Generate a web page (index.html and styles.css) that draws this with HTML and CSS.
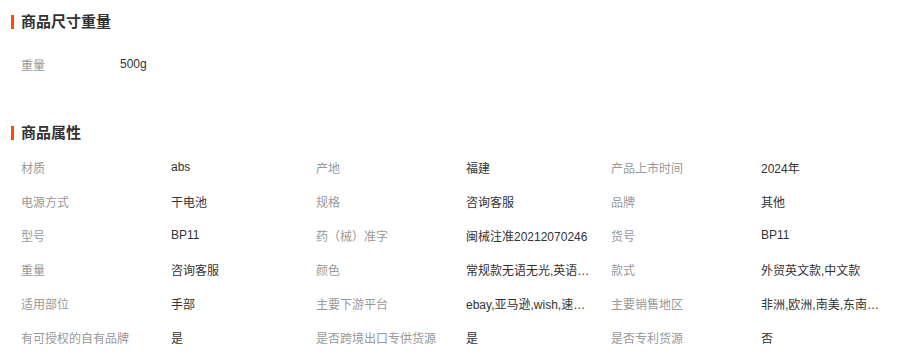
FILE: index.html
```html
<!DOCTYPE html>
<html lang="zh-CN">
<head>
<meta charset="utf-8">
<link rel="stylesheet" href="styles.css">
</head>
<body>
<div class="page">
  <section class="section">
    <h2 class="title">商品尺寸重量</h2>
    <div class="size-row">
      <span class="label short">重量</span>
      <span class="value">500g</span>
    </div>
  </section>
  <section class="section attrs">
    <h2 class="title">商品属性</h2>
    <div class="grid">
      <span class="label">材质</span><span class="value">abs</span>
      <span class="label">产地</span><span class="value">福建</span>
      <span class="label">产品上市时间</span><span class="value">2024年</span>

      <span class="label">电源方式</span><span class="value">干电池</span>
      <span class="label">规格</span><span class="value">咨询客服</span>
      <span class="label">品牌</span><span class="value">其他</span>

      <span class="label">型号</span><span class="value">BP11</span>
      <span class="label">药（械）准字</span><span class="value">闽械注准20212070246</span>
      <span class="label">货号</span><span class="value">BP11</span>

      <span class="label">重量</span><span class="value">咨询客服</span>
      <span class="label">颜色</span><span class="value">常规款无语无光,英语款有语音有光</span>
      <span class="label">款式</span><span class="value">外贸英文款,中文款</span>

      <span class="label">适用部位</span><span class="value">手部</span>
      <span class="label">主要下游平台</span><span class="value">ebay,亚马逊,wish,速卖通,独立站</span>
      <span class="label">主要销售地区</span><span class="value">非洲,欧洲,南美,东南亚,北美</span>

      <span class="label">有可授权的自有品牌</span><span class="value">是</span>
      <span class="label">是否跨境出口专供货源</span><span class="value">是</span>
      <span class="label">是否专利货源</span><span class="value">否</span>
    </div>
  </section>
</div>
</body>
</html>
```

FILE: styles.css
```css
* { box-sizing: border-box; }
html, body {
  margin: 0;
  padding: 0;
  background: #fff;
}
body {
  font-family: "Liberation Sans", "Noto Sans CJK SC", sans-serif;
  font-size: 12px;
  color: #333;
}
.page {
  padding: 5px 0 0 11px;
}
.title {
  margin: 0;
  height: 34px;
  line-height: 34px;
  font-size: 15px;
  font-weight: bold;
  color: #333;
  display: flex;
  align-items: center;
  gap: 7px;
}
.title::before {
  content: "";
  width: 3px;
  height: 14px;
  background: #ff4a00;
}
.size-row {
  display: flex;
  height: 34px;
  align-items: center;
  margin-top: 8px;
  padding-left: 10px;
}
.label {
  color: #999;
  white-space: nowrap;
}
.label.short {
  width: 99px;
}
.value {
  color: #333;
  white-space: nowrap;
  overflow: hidden;
  text-overflow: ellipsis;
}
.attrs {
  margin-top: 35px;
}
.grid {
  display: grid;
  grid-template-columns: 150px 145px 150px 145px 150px 145px;
  grid-auto-rows: 34px;
  align-items: center;
  padding-left: 10px;
}
.grid .value {
  max-width: 124px;
}
```
